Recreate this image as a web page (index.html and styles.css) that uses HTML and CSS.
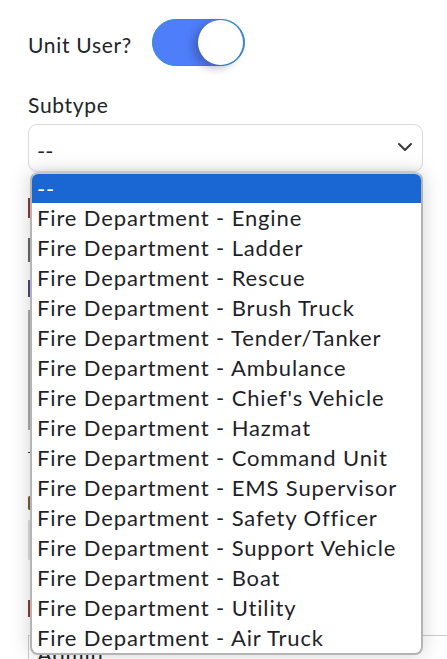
FILE: index.html
```html
<!DOCTYPE html>
<html>
<head>
<meta charset="utf-8">
<link rel="stylesheet" href="styles.css">
</head>
<body>
<div class="form">
  <div class="toggle-row">
    <span class="label">Unit User?</span>
    <span class="switch"><span class="knob"></span></span>
  </div>
  <div class="label sub-label">Subtype</div>
  <div class="select-wrap">
    <div class="select">
      <span>--</span>
      <svg class="chev" width="16" height="12" viewBox="0 0 16 12"><path d="M2 3l6 6 6-6" fill="none" stroke="#343a40" stroke-width="2" stroke-linecap="round" stroke-linejoin="round"/></svg>
    </div>
    <div class="under">
      <div class="frag red f1"></div>
      <div class="frag dark f2"></div>
      <div class="frag navy f3"></div>
      <div class="frag gray f4"></div>
      <div class="frag dot f5"></div>
      <div class="frag brown f6"></div>
      <div class="frag light f7"></div>
      <div class="frag red f8"></div>
      <div class="adminbox"><span class="admin">Admin</span></div>
    </div>
    <div class="dropdown">
      <div class="opt sel">--</div>
      <div class="opt">Fire Department - Engine</div>
      <div class="opt">Fire Department - Ladder</div>
      <div class="opt">Fire Department - Rescue</div>
      <div class="opt">Fire Department - Brush Truck</div>
      <div class="opt">Fire Department - Tender/Tanker</div>
      <div class="opt">Fire Department - Ambulance</div>
      <div class="opt">Fire Department - Chief's Vehicle</div>
      <div class="opt">Fire Department - Hazmat</div>
      <div class="opt">Fire Department - Command Unit</div>
      <div class="opt">Fire Department - EMS Supervisor</div>
      <div class="opt">Fire Department - Safety Officer</div>
      <div class="opt">Fire Department - Support Vehicle</div>
      <div class="opt">Fire Department - Boat</div>
      <div class="opt">Fire Department - Utility</div>
      <div class="opt">Fire Department - Air Truck</div>
    </div>
  </div>
</div>
</body>
</html>
```
FILE: styles.css
```css
html, body { margin: 0; padding: 0; background: #fff; overflow: hidden; }
body { width: 447px; height: 659px; font-family: Lato, "Noto Sans", sans-serif; color: #212529; }
.form { padding: 19px 0 0 28px; width: 395px; }
.toggle-row { display: flex; align-items: center; gap: 20px; height: 47px; }
.label { font-size: 21px; letter-spacing: 0.7px; line-height: 24px; }
.toggle-row .label { margin-top: 4px; }
.switch { position: relative; width: 91px; height: 45px; border-radius: 24px; background: #4f7efa; border: 1px solid #2196b6; display: block; }
.knob { position: absolute; right: 1px; top: 0; width: 45px; height: 45px; border-radius: 50%; background: #fff; box-shadow: -5px 3px 8px rgba(40,40,80,0.35); }
.sub-label { margin-top: 27px; }
.select-wrap { position: relative; margin-top: 7px; height: 520px; }
.select { box-sizing: border-box; height: 48px; border: 1px solid #dadada; border-radius: 9px; display: flex; align-items: center; justify-content: space-between; padding: 4px 8px 0 8px; font-size: 22px; background: #fff; box-shadow: inset 0 -4px 6px -4px rgba(0,0,0,0.08); }
.chev { margin-top: -6px; margin-right: 1px; }
.under { position: relative; }
.frag { position: absolute; left: 0; width: 3px; }
.red { background: #8d3b3b; }
.dark { background: #666; }
.navy { background: #4a4a7a; }
.gray { background: #aaa; }
.light { background: #ddd; border-radius: 2px; }
.brown { background: #7a5a3a; border-radius: 2px; }
.dot { height: 1px; border-top: 1px dotted #333; width: 4px; }
.f1 { top: 26px; height: 20px; }
.f2 { top: 66px; height: 24px; }
.f3 { top: 108px; height: 17px; }
.f4 { top: 138px; height: 120px; width: 2px; }
.f5 { top: 280px; }
.f6 { top: 324px; height: 14px; }
.f7 { top: 348px; height: 40px; width: 2px; }
.f8 { top: 428px; height: 17px; }
.adminbox { position: absolute; left: 0; top: 463px; width: 440px; height: 24px; border-top: 1px solid #ccc; border-left: 1px solid #ccc; overflow: hidden; }
.admin { position: absolute; left: 8px; top: 6px; font-size: 22px; letter-spacing: 0.8px; line-height: 24px; }
.dropdown { position: absolute; left: 2px; top: 48px; width: 393px; box-sizing: border-box; background: #fff; border: 2px solid #b4b4b4; border-top-color: #c8c8c8; border-radius: 8px; overflow: hidden; box-shadow: 0 0 20px rgba(0,0,0,0.18); }
.opt { height: 30px; line-height: 29px; padding-left: 5px; font-size: 22px; letter-spacing: 0.87px; white-space: nowrap; color: #1f1f2a; }
.opt.sel { background: #1a67d3; color: #fff; height: 29px; line-height: 29px; }
```
